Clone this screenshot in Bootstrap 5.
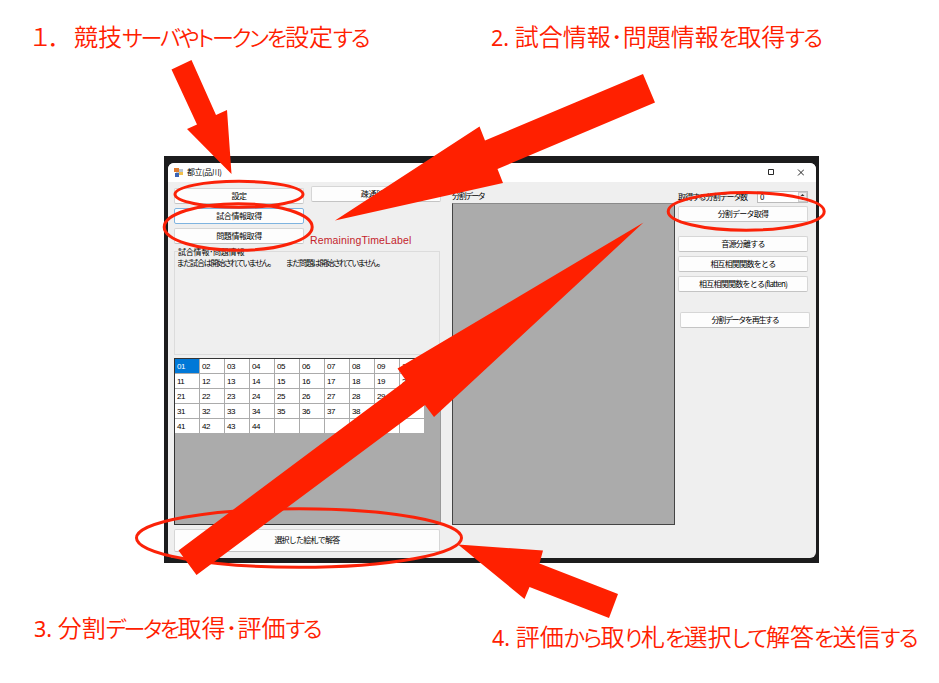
<!DOCTYPE html>
<html lang="en">
<head>
<meta charset="utf-8">
<title>都立(品川)</title>
<link href="https://cdn.jsdelivr.net/npm/bootstrap@5.3.0/dist/css/bootstrap.min.css" rel="stylesheet">
<style>
body{width:939px;height:683px;overflow:hidden;background:#fff;font-family:"Liberation Sans","Noto Sans CJK JP",sans-serif}
.stage{width:939px;height:683px}
.cap{flex-shrink:0;color:#ff2000;font-family:"Noto Sans CJK JP",sans-serif;font-weight:350;font-size:24px;line-height:30px;white-space:nowrap;font-feature-settings:"palt"}
.cap .num{font-family:"Noto Sans","Noto Sans CJK JP",sans-serif;font-size:21.5px;font-weight:400}
.cap i{font-style:normal;font-size:22px;letter-spacing:-2.1px}
.c2 i,.c4 i{letter-spacing:-1.8px}
.c3 i{letter-spacing:-2.5px}
.caps-top{height:156px;padding:21px 0 0 31px}
.caps-bottom{padding:49px 0 0 34px}
.c1{width:460px}
.c3{width:458px}
.c4{padding-top:9px}
.screen{width:655px;height:407px;margin-left:164px;background:#1c1c1d;padding:7px 3px 5px 4px}
.win{background:#efefef;border-radius:6px;overflow:hidden;font-family:"Noto Sans CJK JP",sans-serif;font-size:8px;line-height:10px;color:#000;font-feature-settings:"palt";letter-spacing:-.75px}
.titlebar{height:19px;background:#fff;padding:0 12px 0 6px}
.titlebar .ttl{letter-spacing:-.5px;margin-top:-2px}
.left{width:267px;margin-left:6px}
.mid{width:223px;margin-left:11px}
.right{width:133px;margin-left:3px}
.wbtn{--bs-btn-padding-x:0;--bs-btn-padding-y:0;--bs-btn-font-size:8px;--bs-btn-border-radius:2px;--bs-btn-bg:#fdfdfd;--bs-btn-border-color:#d6d6d6;--bs-btn-color:#000;--bs-btn-line-height:10px;height:16px;display:flex;align-items:center;justify-content:center;width:130px;border-bottom-color:#c4c4c4;white-space:nowrap;font-family:inherit;letter-spacing:inherit}
.kanji,.kanji .wbtn{letter-spacing:-.4px}
.wbtn.focused{border-color:#7fb4e0}
.remain{color:#c4242c;font-size:10.5px;letter-spacing:.15px;line-height:12px;font-family:"Liberation Sans",sans-serif;margin:0 0 -2px -1px}
.group{height:104px;width:266px;border:1px solid #dcdcdc;margin-top:7px}
.group .gt{margin-top:-5px;margin-left:3px;background:#efefef;width:68px;line-height:10px;letter-spacing:-.2px}
.group .gb{padding:1px 0 0 2px;line-height:10px;font-size:8px;letter-spacing:-1.2px}
.dgv{height:167px;background:#ababab;border:1px solid #333;border-right-color:#999;margin-top:3px}
.cells{width:250px;display:grid;grid-template-columns:repeat(10,25px);grid-auto-rows:15px;font-family:"Liberation Sans",sans-serif;font-size:8px;letter-spacing:-.5px}
.cells span{background:#fff;border-right:1px solid #ababab;border-bottom:1px solid #ababab;padding:3px 0 0 2px;line-height:10px}
.cells .sel{background:#0078d7;color:#fff}
.panel{height:322px;background:#ababab;border:1px solid #444;border-top:1px solid #8a8a8a}
.numbox{width:51px;height:12px;background:#fff;border:1px solid #bbb;padding-left:2px;line-height:10px}
.spin{width:9px;background:#eee;border:1px solid #ccc}
.ink{position:absolute;left:0;top:0}
</style>
<script src="https://cdn.jsdelivr.net/npm/bootstrap@5.3.0/dist/js/bootstrap.bundle.min.js"></script>
</head>
<body>
<div class="stage position-relative">
  <div class="caps-top d-flex">
    <div class="cap c1"><span class="d-inline-block" style="width:43px">１．</span>競技<i>サーバやトークンを</i>設定<i>する</i></div>
    <div class="cap c2"><span class="num">2. </span>試合情報･問題情報<i>を</i>取得<i>する</i></div>
  </div>
  <main class="screen">
    <div class="win h-100 d-flex flex-column">
      <div class="titlebar d-flex align-items-center">
        <svg width="9" height="9" viewBox="0 0 9 9"><path fill="#b9c4d4" d="M2 1h7v6H2z"/><path fill="#e07a2c" d="M0 0h5v4H0z"/><path fill="#f2c14c" d="M5 4h4v3H5z"/><path fill="#3c64b4" d="M1 5h4v4H1z"/></svg>
        <span class="ttl ms-1">都立(品川)</span>
        <svg class="ms-auto" width="36" height="9" viewBox="0 0 36 9" fill="none" stroke="#111"><path d="M.5 1.500h5v5h-5z" stroke-width=".9"/><path d="M30 1.500l6 6m0-6l-6 6" stroke-width=".9"/></svg>
      </div>
      <div class="d-flex flex-fill">
        <section class="left">
          <div class="kanji d-flex justify-content-between">
            <div class="d-flex flex-column gap-1" style="padding-top:6px">
              <button class="btn wbtn">設定</button>
              <button class="btn wbtn focused">試合情報取得</button>
              <button class="btn wbtn">問題情報取得</button>
            </div>
            <div class="d-flex flex-column justify-content-between" style="padding-top:4px">
              <button class="btn wbtn">疎通確認</button>
              <div class="remain">RemainingTimeLabel</div>
            </div>
          </div>
          <div class="group">
            <div class="gt text-nowrap">試合情報･問題情報</div>
            <div class="gb d-flex text-nowrap"><span class="flex-shrink-0" style="width:109px">まだ試合は開始されていません。</span><span>まだ問題は開始されていません。</span></div>
          </div>
          <div class="dgv"><div class="cells" id="cells"></div></div>
          <button class="btn wbtn" style="width:266px;height:23px;margin-top:4px;padding-bottom:2px">選択した絵札で解答</button>
        </section>
        <section class="mid">
          <div style="padding-top:9px;height:21px;letter-spacing:-1.3px">分割データ</div>
          <div class="panel"></div>
        </section>
        <section class="right">
          <div class="d-flex justify-content-between align-items-center" style="padding-top:6px;height:24px;width:130px">
            <span class="text-nowrap">取得する分割データ数</span>
            <div class="numbox d-flex justify-content-between"><span>0</span><span class="spin d-flex"><svg width="7" height="8" viewBox="0 0 7 8"><path d="M1.500 3l2-2 2 2zM1.500 5l2 2 2-2z" fill="#333"/></svg></span></div>
          </div>
          <button class="btn wbtn">分割データ取得</button>
          <div class="d-flex flex-column gap-1" style="margin-top:14px">
            <button class="btn wbtn">音源分離する</button>
            <button class="btn wbtn">相互相関関数をとる</button>
            <button class="btn wbtn">相互相関関数をとる(flatten)</button>
          </div>
          <button class="btn wbtn" style="margin:20px 0 0 2px;letter-spacing:-1.3px">分割データを再生する</button>
        </section>
      </div>
    </div>
  </main>
  <div class="caps-bottom d-flex">
    <div class="cap c3"><span class="num">3. </span>分割<i>データを</i>取得･評価<i>する</i></div>
    <div class="cap c4"><span class="num">4. </span>評価<i>から</i>取<i>り</i>札<i>を</i>選択<i>して</i>解答<i>を</i>送信<i>する</i></div>
  </div>
  <svg class="ink" width="939" height="683" viewBox="0 0 939 683">
    <g fill="none" stroke="#fb2208" stroke-width="3">
      <ellipse cx="239" cy="194.300" rx="64" ry="13"/>
      <ellipse cx="238.200" cy="227" rx="74" ry="23.300"/>
      <ellipse cx="746.200" cy="211.400" rx="78" ry="18.800"/>
      <ellipse cx="299" cy="538" rx="162.500" ry="29.300"/>
    </g>
    <g fill="#ff2000">
      <path d="M171.500 69.500L191.500 60 216 115l11-5 4.500 64-44.500-45 10-4.500z"/>
      <path d="M335 220.500L479.500 126.500l5.500 14L643 74l12 28.500L497.500 169l5.500 14z"/>
      <path d="M643.500 222.500L434 417l-9-12L196.500 575l-18-24.500L406 380.500l-8.500-12z"/>
      <path d="M458 544.500l85 6-3.500 13L618 594l-9 24-79.500-31-5 12z"/>
    </g>
  </svg>
</div>
<script>
const cells=document.getElementById('cells');
for(let i=1;i<=50;i++){
  const s=document.createElement('span');
  if(i<=44)s.textContent=String(i).padStart(2,'0');
  if(i===1)s.className='sel';
  cells.append(s);
}
</script>
</body>
</html>
